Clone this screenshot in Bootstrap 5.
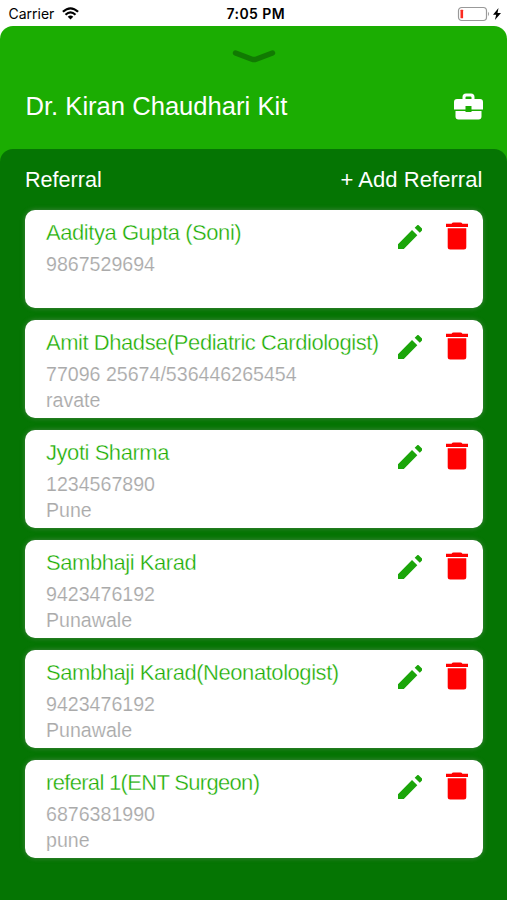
<!DOCTYPE html>
<html lang="en">
<head>
<meta charset="utf-8">
<meta name="viewport" content="width=device-width, initial-scale=1">
<title>Referral Kit</title>
<link href="https://cdn.jsdelivr.net/npm/bootstrap@5.3.0/dist/css/bootstrap.min.css" rel="stylesheet">
<style>
body{font-family:"Liberation Sans",Arial,sans-serif;height:900px;overflow:hidden}
svg{display:block;flex:none}
.status{height:25.5px;font-family:Inter,sans-serif;font-size:14px;line-height:24px;padding:1.5px 5px 0 8.5px}
.status>div{flex:1 1 0}
.status .clock{font-weight:600;letter-spacing:.42px;flex:0 0 auto;padding-left:1px}
.sheet{background:#1bad02;border-radius:13px 13px 0 0}
.grip{padding-top:23px;height:62px}
.kit-head{height:38px;padding:0 24px 0 25.5px;margin-bottom:23.5px}
.kit-title{font-size:25.6px;line-height:37px}
.panel{background:#057503;border-radius:13px 13px 0 0;padding:0 24.5px 0 25px}
.panel-head{height:60.5px;font-size:22px;line-height:62px}
.panel-head .first{font-size:21.6px}
.panel-head .add{letter-spacing:.06px}
.entries{gap:12px}
.entry{height:98px;border:0;border-radius:10px;padding:8px 14.5px 0 21px;box-shadow:0 0 5px rgba(150,150,150,.45)}
.entry-name{font-size:22px;line-height:30px;letter-spacing:-.45px;color:#1bad02;-webkit-text-stroke:.35px #fff}
.entry-name.tight{letter-spacing:-.68px}
.entry-line{font-size:19.6px;line-height:26px;color:#aaa;-webkit-text-stroke:.15px #fff}
.entry-name+.entry-line{margin-top:3px}
.pen{margin:7px 24px 0 0}
.bin{margin-top:4px}
</style>
<script src="https://cdn.jsdelivr.net/npm/bootstrap@5.3.0/dist/js/bootstrap.bundle.min.js"></script>
</head>
<body class="bg-white d-flex flex-column">
<svg width="0" height="0" class="position-absolute" aria-hidden="true">
  <symbol id="pencil" viewBox="3 3 18 18"><path d="M3 17.1V20.4q0 .6.6.6h3.3L17.2 10.6l-3.9-3.9zM20.71 7.04a1 1 0 0 0 0-1.41l-2.34-2.34a1 1 0 0 0-1.41 0l-1.7 1.7 3.75 3.75z"/></symbol>
  <symbol id="trash" viewBox="0 0 22 28"><path d="M0 1.8h5.6Q6.2.4 7.5.4h7q1.3 0 1.9 1.4H22v3.300H0zM1.7 6.3h18.600V25q0 2.500-2.500 2.500H4.200q-2.500 0-2.500-2.500z"/></symbol>
</svg>
<header class="status d-flex align-items-center text-black">
  <div class="d-flex align-items-center"><span>Carrier</span>
    <svg class="ms-2" width="17" height="13" viewBox="0 0 17 13" fill="none" stroke="#000" stroke-width="2.2"><path d="M.9 4.8Q8.5-2.2 16.1 4.8M3.5 7.7q5-4.5 10 0"/><path d="M8.5 12.5 5.7 9.7q2.8-2.5 5.6 0z" fill="#000" stroke="none"/></svg>
  </div>
  <span class="clock">7:05 PM</span>
  <div class="d-flex justify-content-end align-items-center">
    <svg width="45" height="16" viewBox="0 0 45 16"><rect x="1.5" y="1.5" width="28" height="13" rx="3.2" fill="#fff" stroke="#999" stroke-width="1.2"/><rect x="3.5" y="3.7" width="2.6" height="8.6" rx=".5" fill="#fb2a20"/><path d="M31 5.8q2 2.2 0 4.4z" fill="#999"/><path d="M41.5 2 36 8.8h3.2L37.9 14 44 7.1h-3.5z"/></svg>
  </div>
</header>
<main class="sheet flex-grow-1 d-flex flex-column text-white">
  <div class="grip d-flex justify-content-center">
    <svg width="44" height="16" viewBox="0 0 44 16" fill="none" stroke="#117a02" stroke-width="5.4" stroke-linecap="round" stroke-linejoin="round"><path d="M3.5 4 20 10.200q2 .7 4 0L40.500 4"/></svg>
  </div>
  <div class="kit-head d-flex justify-content-between align-items-center">
    <h1 class="kit-title fw-normal m-0">Dr. Kiran Chaudhari Kit</h1>
    <svg width="29" height="27" viewBox="0 0 29 27" fill="#fff"><path fill-rule="evenodd" d="M8.5 6V4q0-3.5 3.5-3.5h5q3.5 0 3.5 3.5v2H26q3 0 3 3v7.5H17.5V13h-6v3.500H0V9q0-3 3-3zm3 0h6V4.500q0-1-1-1h-4q-1 0-1 1zM1.500 17.900h10V19h6v-1.100h10v5.600q0 3-3 3h-20q-3 0-3-3z"/></svg>
  </div>
  <section class="panel flex-grow-1">
    <div class="panel-head d-flex justify-content-between"><span class="first">Referral</span><span class="add">+ Add Referral</span></div>
    <div class="entries d-flex flex-column">
      <article class="card entry flex-row"><div class="flex-grow-1 text-nowrap"><div class="entry-name">Aaditya Gupta (Soni)</div><div class="entry-line">9867529694</div></div><svg class="pen" width="24.5" height="24.5" fill="#1ba50a"><use href="#pencil"/></svg><svg class="bin" width="22" height="28" fill="#f00"><use href="#trash"/></svg></article>
      <article class="card entry flex-row"><div class="flex-grow-1 text-nowrap"><div class="entry-name">Amit Dhadse(Pediatric Cardiologist)</div><div class="entry-line">77096 25674/536446265454</div><div class="entry-line">ravate</div></div><svg class="pen" width="24.5" height="24.5" fill="#1ba50a"><use href="#pencil"/></svg><svg class="bin" width="22" height="28" fill="#f00"><use href="#trash"/></svg></article>
      <article class="card entry flex-row"><div class="flex-grow-1 text-nowrap"><div class="entry-name">Jyoti Sharma</div><div class="entry-line">1234567890</div><div class="entry-line">Pune</div></div><svg class="pen" width="24.5" height="24.5" fill="#1ba50a"><use href="#pencil"/></svg><svg class="bin" width="22" height="28" fill="#f00"><use href="#trash"/></svg></article>
      <article class="card entry flex-row"><div class="flex-grow-1 text-nowrap"><div class="entry-name">Sambhaji Karad</div><div class="entry-line">9423476192</div><div class="entry-line">Punawale</div></div><svg class="pen" width="24.5" height="24.5" fill="#1ba50a"><use href="#pencil"/></svg><svg class="bin" width="22" height="28" fill="#f00"><use href="#trash"/></svg></article>
      <article class="card entry flex-row"><div class="flex-grow-1 text-nowrap"><div class="entry-name">Sambhaji Karad(Neonatologist)</div><div class="entry-line">9423476192</div><div class="entry-line">Punawale</div></div><svg class="pen" width="24.5" height="24.5" fill="#1ba50a"><use href="#pencil"/></svg><svg class="bin" width="22" height="28" fill="#f00"><use href="#trash"/></svg></article>
      <article class="card entry flex-row"><div class="flex-grow-1 text-nowrap"><div class="entry-name tight">referal 1(ENT Surgeon)</div><div class="entry-line">6876381990</div><div class="entry-line">pune</div></div><svg class="pen" width="24.5" height="24.5" fill="#1ba50a"><use href="#pencil"/></svg><svg class="bin" width="22" height="28" fill="#f00"><use href="#trash"/></svg></article>
    </div>
  </section>
</main>
</body>
</html>
